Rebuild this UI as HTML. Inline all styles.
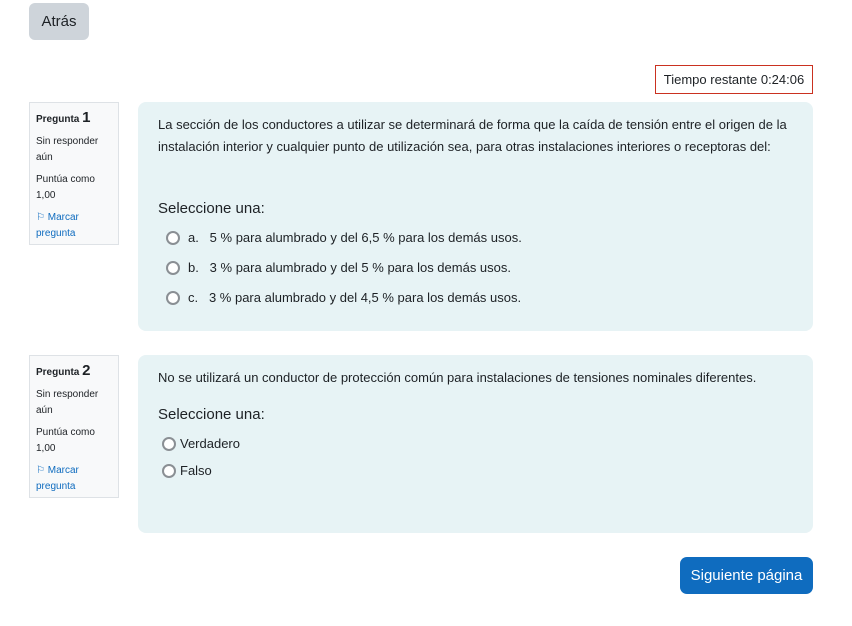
<!DOCTYPE html>
<html><head><meta charset="utf-8"><style>
*{box-sizing:border-box;margin:0;padding:0}
body{width:852px;height:626px;background:#fff;font-family:"Liberation Sans",Arial,sans-serif;color:#1d2125;position:relative;overflow:hidden}
.abs{position:absolute}
.back{left:29px;top:3px;width:60px;height:37px;background:#ced4da;border-radius:6px;font-size:15px;line-height:37px;text-align:center;color:#1d2125}
.timer{left:655px;top:65px;width:158px;height:29px;border:1px solid #ca3120;font-size:13px;line-height:27px;text-align:center}
.info{left:29px;width:90px;border:1px solid #dee2e6;background:#f8f9fa;padding:7px 6px;font-size:10px;line-height:16px}
.info b{font-size:10px}
.info b span{font-size:15px}
.info p{margin-bottom:6px}
.info a{color:#0f6cbf}
.q{left:138px;width:675px;background:#e7f3f5;border-radius:8px;padding:12px 20px;font-size:13px;line-height:22px}
.sel{font-size:15px;}
.opt{display:flex;align-items:center;height:30px}
.r{width:14px;height:14px;border:2px solid #8a8f94;border-radius:50%;background:#fff;margin-right:8px;flex:none}
.next{left:680px;top:557px;width:133px;height:37px;background:#0f6cbf;color:#fff;border-radius:7px;font-size:15px;line-height:37px;text-align:center}
</style></head><body>
<div class="abs back">Atrás</div>
<div class="abs timer">Tiempo restante 0:24:06</div>

<div class="abs info" style="top:102px;height:143px">
<p><b>Pregunta <span>1</span></b></p>
<p>Sin responder aún</p>
<p>Puntúa como 1,00</p>
<p><a>⚐ Marcar pregunta</a></p>
</div>
<div class="abs q" style="top:102px;height:229px">
<div>La sección de los conductores a utilizar se determinará de forma que la caída de tensión entre el origen de la instalación interior y cualquier punto de utilización sea, para otras instalaciones interiores o receptoras del:</div>
<div class="sel" style="margin-top:40px">Seleccione una:</div>
<div class="opt" style="margin-left:8px;margin-top:3px"><span class="r"></span>a.&nbsp;&nbsp;&nbsp;5 % para alumbrado y del 6,5 % para los demás usos.</div>
<div class="opt" style="margin-left:8px"><span class="r"></span>b.&nbsp;&nbsp;&nbsp;3 % para alumbrado y del 5 % para los demás usos.</div>
<div class="opt" style="margin-left:8px"><span class="r"></span>c.&nbsp;&nbsp;&nbsp;3 % para alumbrado y del 4,5 % para los demás usos.</div>
</div>

<div class="abs info" style="top:355px;height:143px">
<p><b>Pregunta <span>2</span></b></p>
<p>Sin responder aún</p>
<p>Puntúa como 1,00</p>
<p><a>⚐ Marcar pregunta</a></p>
</div>
<div class="abs q" style="top:355px;height:178px">
<div>No se utilizará un conductor de protección común para instalaciones de tensiones nominales diferentes.</div>
<div class="sel" style="margin-top:15px">Seleccione una:</div>
<div class="opt" style="margin-left:4px;height:27px;margin-top:4px"><span class="r" style="margin-right:4px"></span>Verdadero</div>
<div class="opt" style="margin-left:4px;height:27px"><span class="r" style="margin-right:4px"></span>Falso</div>
</div>

<div class="abs next">Siguiente página</div>
</body></html>
